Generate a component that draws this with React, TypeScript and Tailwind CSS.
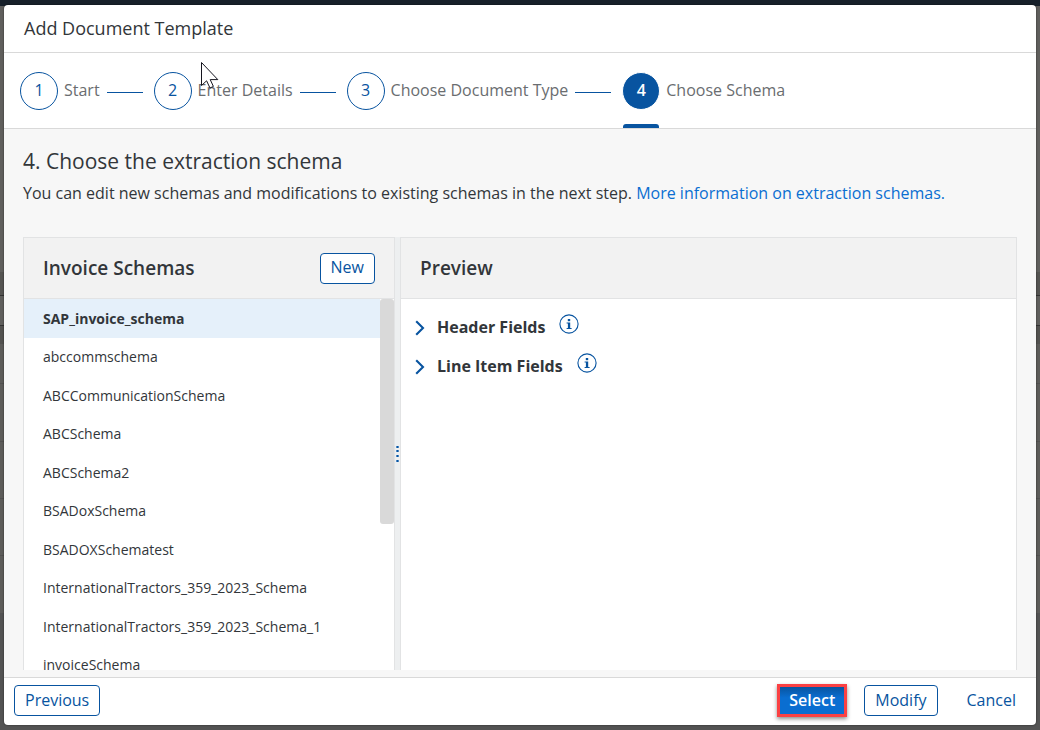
import React from 'react';

const steps = [
  { n: 1, label: 'Start' },
  { n: 2, label: 'Enter Details' },
  { n: 3, label: 'Choose Document Type' },
  { n: 4, label: 'Choose Schema' },
];

const schemas = [
  'SAP_invoice_schema',
  'abccommschema',
  'ABCCommunicationSchema',
  'ABCSchema',
  'ABCSchema2',
  'BSADoxSchema',
  'BSADOXSchematest',
  'InternationalTractors_359_2023_Schema',
  'InternationalTractors_359_2023_Schema_1',
  'invoiceSchema',
];

const previewGroups = ['Header Fields', 'Line Item Fields'];

function Backdrop() {
  return (
    <div aria-hidden="true" className="absolute inset-0 flex flex-col bg-[#535353]">
      <div className="h-1.5 bg-[#17202a]" />
      <div className="h-[266px] bg-[#605f5d]" />
      <div className="h-6 border-b border-[#333333] bg-[#555452]" />
      <div className="h-[30px] border-b border-[#333333] bg-[#605f5d]" />
      <div className="h-[18px] bg-[#535250]" />
      <div className="h-10 border-b border-[#525150] bg-[#5d5c5a]" />
      <div className="h-[58px] border-b border-[#525150] bg-[#5d5c5a]" />
      <div className="h-[57px] border-b border-[#525150] bg-[#5d5c5a]" />
      <div className="h-[57px] border-b border-[#525150] bg-[#5d5c5a]" />
      <div className="h-[57px] bg-[#5d5c5a]" />
    </div>
  );
}

function StepMarker({ n, active }: { n: number; active: boolean }) {
  return active ? (
    <span className="flex size-[38px] items-center justify-center rounded-full border border-white bg-[#0854a0] pb-0.5 font-semibold text-white">
      {n}
    </span>
  ) : (
    <span className="flex size-[38px] items-center justify-center rounded-full border border-[#0854a0] bg-white pb-0.5 text-[#0854a0]">
      {n}
    </span>
  );
}

function InfoIcon() {
  return (
    <svg viewBox="0 0 20 20" className="size-5" aria-hidden="true">
      <circle cx="10" cy="10" r="9.1" fill="none" stroke="#0854a0" strokeWidth="1.1" />
      <rect x="8.8" y="5" width="2.4" height="2.2" fill="#0854a0" />
      <path d="M7.6 8.4H11.2V14H12.6V15H7.6V14H8.9V9.4H7.6Z" fill="#0854a0" />
    </svg>
  );
}

function Cursor() {
  return (
    <svg viewBox="0 0 20 28" className="pointer-events-none absolute left-[200px] top-[61px] h-7 w-5" aria-hidden="true">
      <path
        d="M1.5 1.5V24.5L6.6 19.8L10 27L13.4 25.4L10.2 18.6H17.8Z"
        fill="#fff"
        stroke="#15151f"
        strokeWidth="1"
      />
    </svg>
  );
}

const outlineButton =
  'h-[31px] rounded-[4px] border border-[#0854a0] bg-white px-[10px] pb-0.5 text-[16px] leading-6 text-[#0854a0]';

export default function App() {
  return (
    <div className="relative flex h-screen flex-col px-1 py-[5px] font-['Open_Sans','Noto_Sans',sans-serif] text-[16px] leading-6 text-[#32363a]">
      <Backdrop />
      <div
        role="dialog"
        aria-labelledby="dialog-title"
        className="relative flex min-h-0 flex-1 flex-col overflow-hidden rounded-[4px] bg-white shadow-[0_0_2px_rgba(0,0,0,0.6)]"
      >
        <header className="flex h-12 shrink-0 items-center border-b border-[#d9d9d9] px-5 pb-0.5">
          <h1 id="dialog-title" className="text-[18px] leading-6">
            Add Document Template
          </h1>
        </header>

        <nav aria-label="Wizard steps" className="h-[76px] shrink-0 border-b border-[#d9d9d9] px-4">
          <ol className="flex h-full items-center">
            {steps.map((s, i) => {
              const active = i === steps.length - 1;
              return (
                <li key={s.n} className="relative flex h-full items-center whitespace-nowrap text-[#6a6d70]">
                  <StepMarker n={s.n} active={active} />
                  <span className="ml-1.5 pb-0.5">{s.label}</span>
                  {!active && <span className="ml-[7px] mr-[11px] mt-[3px] h-px w-9 bg-[#0854a0]" />}
                  {active && <span className="absolute bottom-0 left-px h-1 w-9 rounded-t-[3px] bg-[#0854a0]" />}
                </li>
              );
            })}
          </ol>
        </nav>

        <main className="flex min-h-0 flex-1 flex-col bg-[#f7f7f7] px-[19px] pb-[7px] pt-[18px]">
          <h2 className="text-[21px] leading-7">4. Choose the extraction schema</h2>
          <p className="mt-[6px] leading-6">
            You can edit new schemas and modifications to existing schemas in the next step.{' '}
            <a href="#schemas" className="text-[#0a6ed1]">
              More information on extraction schemas.
            </a>
          </p>

          <div className="mt-8 flex min-h-0 flex-1">
            <section className="flex w-[372px] shrink-0 flex-col border-x border-t border-[#e2e3e4] bg-white">
              <div className="flex h-[61px] shrink-0 items-center justify-between border-b border-[#e2e3e4] bg-[#f2f2f2] px-[19px]">
                <h3 className="text-[19px] font-semibold">Invoice Schemas</h3>
                <button type="button" className={outlineButton}>
                  New
                </button>
              </div>
              <div className="flex min-h-0 flex-1">
                <ul className="min-w-0 flex-1 overflow-hidden text-[14px] leading-5">
                  {schemas.map((name, i) => (
                    <li
                      key={name}
                      className={
                        i === 0
                          ? 'flex h-[39px] items-center bg-[#e5f0fa] px-[19px] font-bold'
                          : 'flex items-center px-[19px] odd:h-[39px] even:h-[38px]'
                      }
                    >
                      {name}
                    </li>
                  ))}
                </ul>
                <div className="w-3.5 shrink-0">
                  <div className="h-[225px] rounded-[3px] bg-[#d9d9d9]" />
                </div>
              </div>
            </section>

            <div role="separator" className="flex w-[5px] shrink-0 items-center justify-center bg-[#edeff0]">
              <svg viewBox="0 0 3 16" className="h-4 w-[3px]" aria-hidden="true">
                <path d="M0 1H3M0 5H3M0 10H3M0 15H3" stroke="#4f8ac4" strokeWidth="2" />
                <path d="M1 1H2M1 5H2M1 10H2M1 15H2" stroke="#0854a0" strokeWidth="2" />
              </svg>
            </div>

            <section className="flex min-w-0 flex-1 flex-col border-x border-t border-[#e2e3e4] bg-white">
              <div className="flex h-[61px] shrink-0 items-center border-b border-[#e2e3e4] bg-[#f2f2f2] px-[19px]">
                <h3 className="text-[19px] font-semibold">Preview</h3>
              </div>
              <ul className="flex flex-col pt-[9px]">
                {previewGroups.map((g) => (
                  <li key={g} className="flex h-[39px] items-center">
                    <button type="button" className="flex items-center font-bold">
                      <svg viewBox="0 0 10 16" className="ml-[14px] mr-3 h-4 w-[10px]" aria-hidden="true">
                        <path d="M1.2 1.2L8 8L1.2 14.8" fill="none" stroke="#0854a0" strokeWidth="2.1" />
                      </svg>
                      <span className="pb-0.5">{g}</span>
                    </button>
                    <button type="button" aria-label={g + ' information'} className="mb-2 ml-3.5">
                      <InfoIcon />
                    </button>
                  </li>
                ))}
              </ul>
            </section>
          </div>
        </main>

        <footer className="flex h-12 shrink-0 items-center border-t border-[#d9d9d9] px-[10px] pb-0.5">
          <button type="button" className={outlineButton}>
            Previous
          </button>
          <div className="ml-auto flex items-center">
            <button
              type="button"
              className="mr-[17px] h-[33px] border-[3px] border-[#fb4143] bg-linear-to-b from-[#0854a0] to-[#0a6ed1] to-40% px-[9px] pb-0.5 font-semibold leading-6 text-white shadow-[0_2px_4px_rgba(0,0,0,0.45)]"
            >
              Select
            </button>
            <button type="button" className={outlineButton}>
              Modify
            </button>
            <button type="button" className="ml-[19px] px-[10px] pb-0.5 text-[#0854a0]">
              Cancel
            </button>
          </div>
        </footer>
      </div>
      <Cursor />
    </div>
  );
}
